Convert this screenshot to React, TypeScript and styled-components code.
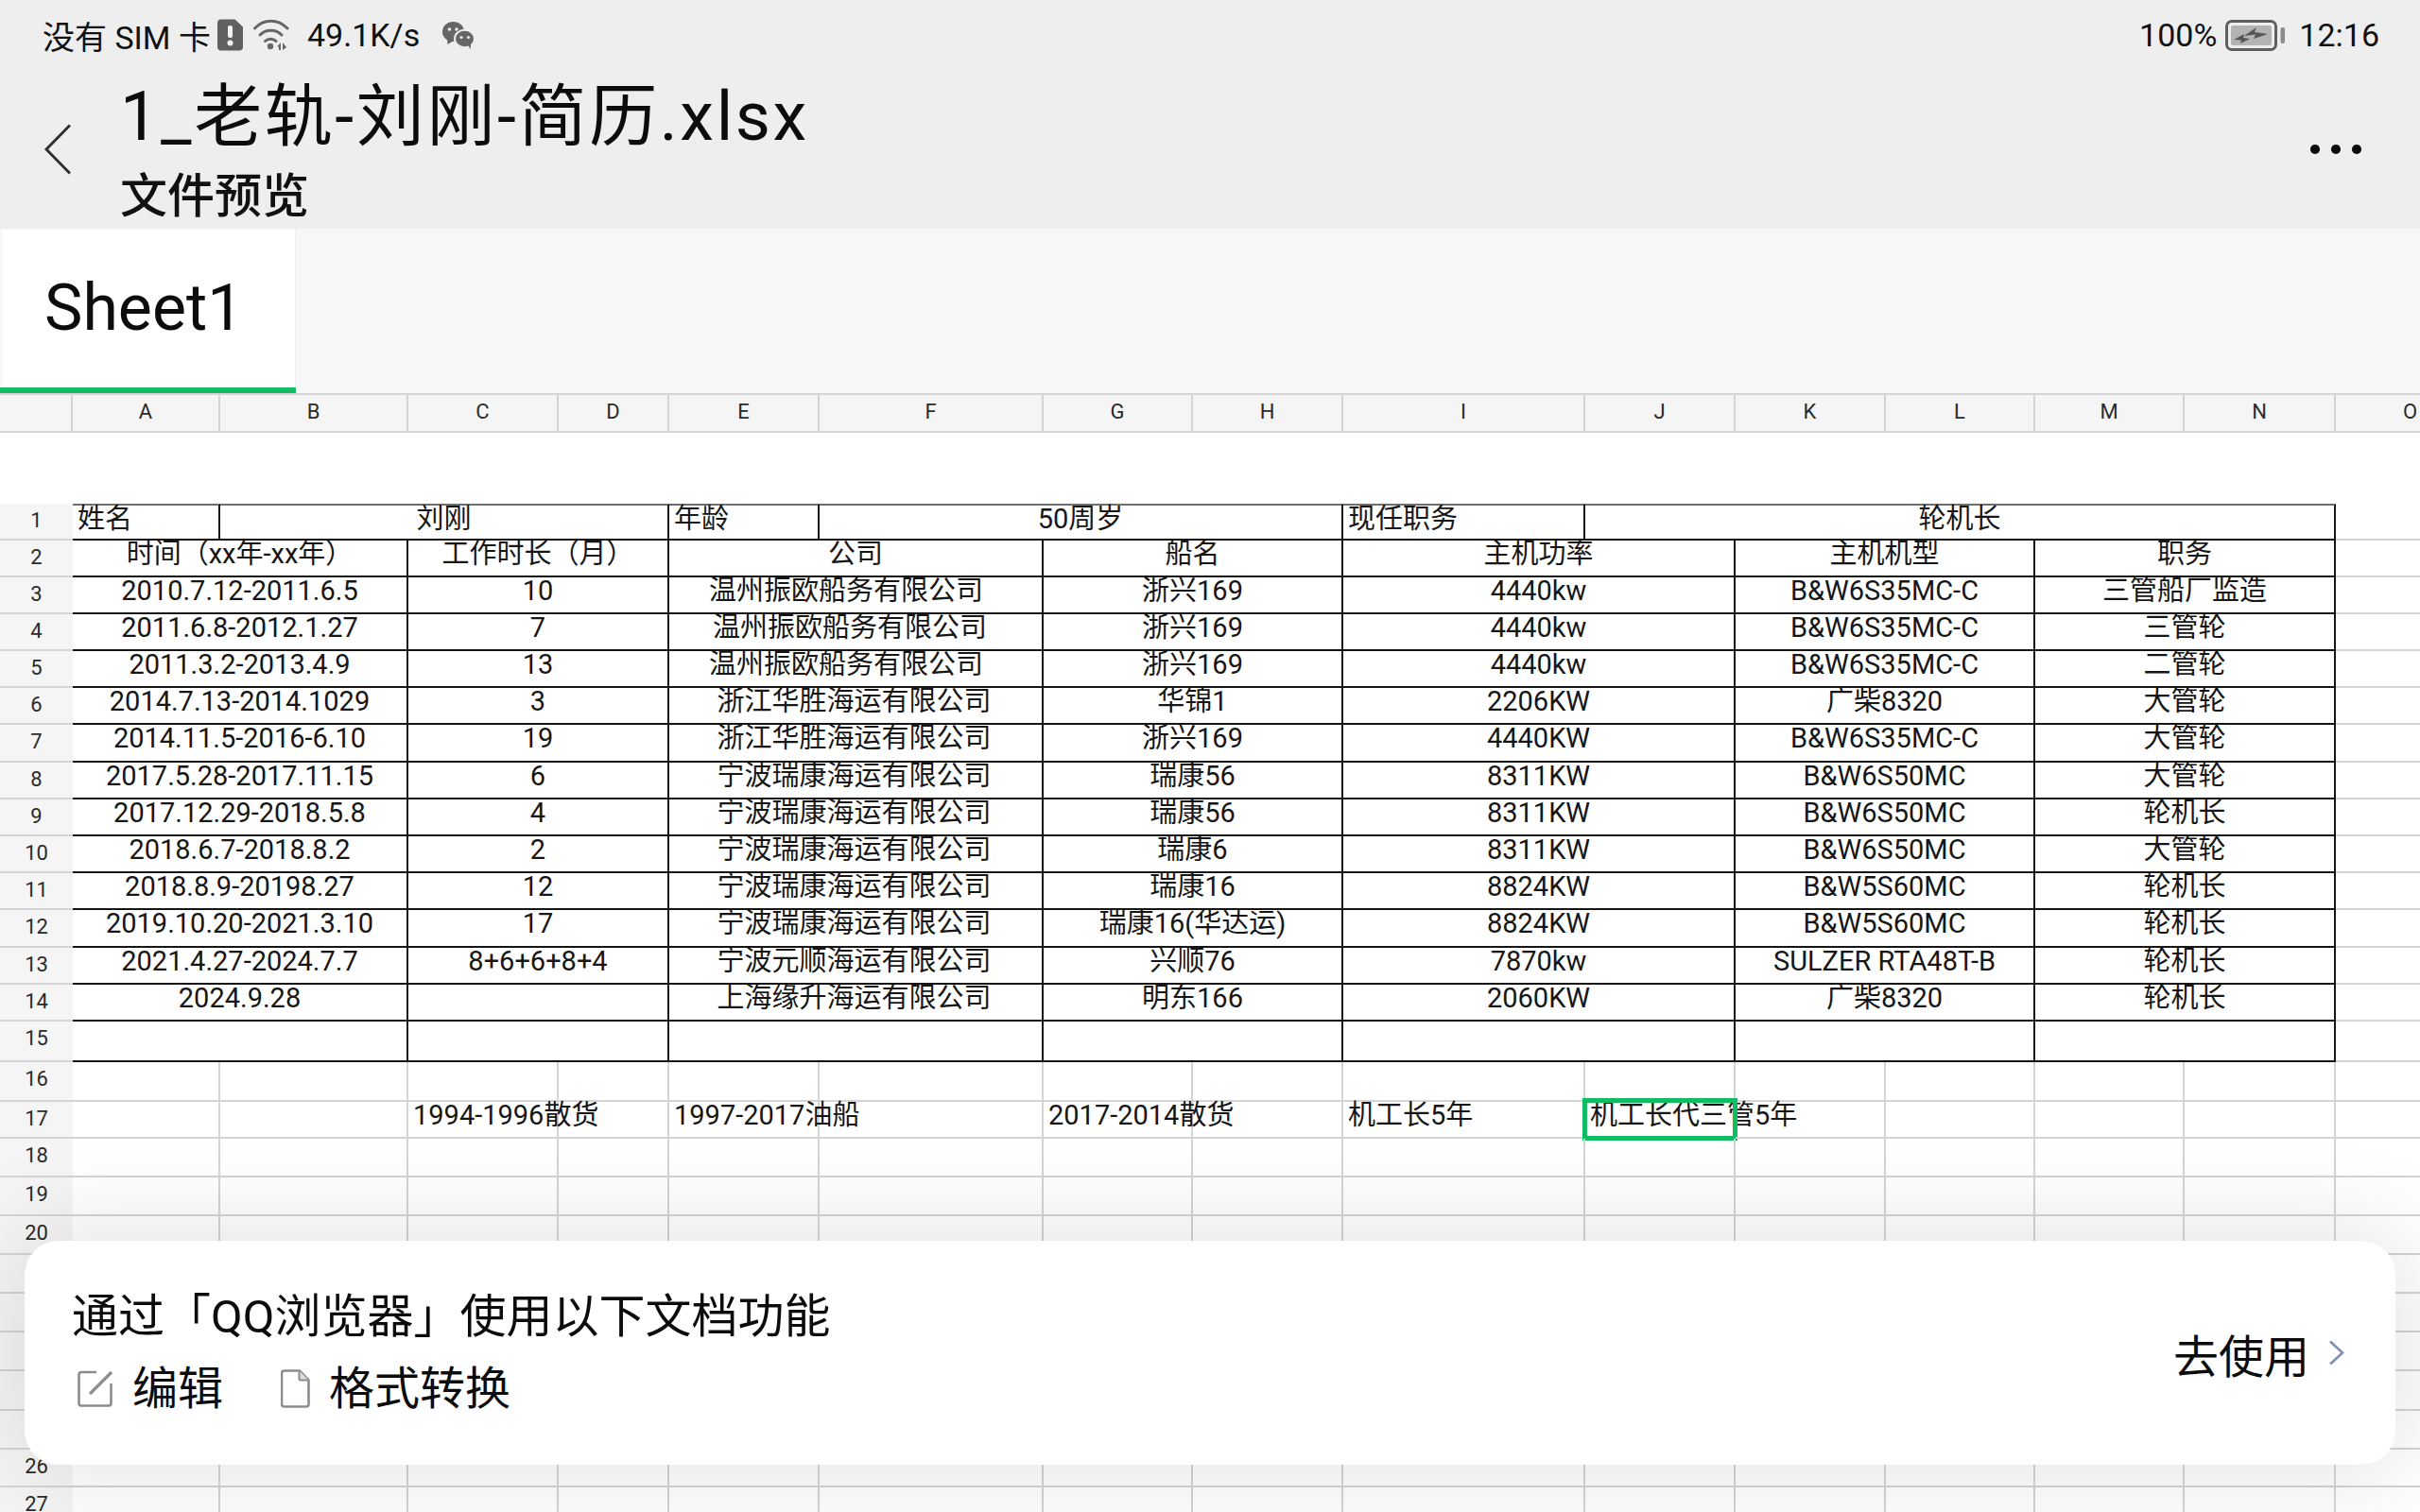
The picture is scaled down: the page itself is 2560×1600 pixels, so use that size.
import React from "react";
import styled, { createGlobalStyle } from "styled-components";

const TRACKS_X =
  "77px 156px 199px 159px 117px 159px 237px 158px 159px 256px 159px 159px 158px 158px 160px 159px";
const TRACKS_Y =
  "39px 39px 39px 39px 39px 39px 40px 39px 39px 39px 39px 40px 39px 39px 43px 42px 39px 41px 41px 41px 41px 41px 41px 42px 41px 40px 41px 41px";

const FONT = `Roboto, "Noto Sans CJK SC", sans-serif`;

const Global = createGlobalStyle`
  html, body { margin: 0; padding: 0; background: #fff; }
  body { font-family: ${FONT}; color: #111; overflow: hidden; }
`;

const Page = styled.div`
  position: relative;
  width: 2560px;
  height: 1600px;
  overflow: hidden;
  display: flex;
  flex-direction: column;
  background: #fff;
`;

const Top = styled.header`
  height: 242px;
  background: #eeeeee;
  flex: none;
`;

const StatusBar = styled.div`
  height: 74px;
  padding: 0 43px 0 45px;
  display: flex;
  align-items: center;
  justify-content: space-between;
  font-size: 34px;
  color: #111;
`;

const StatusGroup = styled.div`
  display: flex;
  align-items: center;
`;

const StatusText = styled.span<{ $left?: number }>`
  margin-left: ${(p) => p.$left ?? 0}px;
  white-space: nowrap;
`;

const StatusIcon = styled.svg<{ $left?: number }>`
  display: block;
  flex: none;
  margin-left: ${(p) => p.$left ?? 0}px;
`;

const NavBar = styled.div`
  height: 168px;
  display: flex;
  align-items: center;
  padding: 0 62px 0 47px;
`;

const BackIcon = styled.svg`
  flex: none;
  display: block;
  margin-right: 52px;
`;

const Titles = styled.div`
  flex: 1;
  display: flex;
  flex-direction: column;
`;

const Title = styled.div`
  font-size: 72px;
  line-height: 100px;
  letter-spacing: 2.6px;
  white-space: nowrap;
  color: #0c0c0c;
`;

const Subtitle = styled.div`
  font-size: 50px;
  line-height: 68px;
  font-weight: 500;
  color: #111;
`;

const Dots = styled.div`
  display: flex;
  gap: 12.4px;
`;

const Dot = styled.span`
  width: 9.6px;
  height: 9.6px;
  border-radius: 50%;
  background: #0c0c0c;
`;

const TabBar = styled.div`
  height: 174px;
  flex: none;
  background: #f7f7f7;
  display: flex;
`;

const Tab = styled.div`
  width: 313px;
  height: 174px;
  box-sizing: border-box;
  padding: 1px 0 0 2px;
  border-bottom: 6px solid #10bd62;
  display: flex;
  align-items: stretch;
`;

const TabLabel = styled.div`
  flex: 1;
  background: #fff;
  font-size: 68px;
  line-height: 166px;
  padding-left: 45px;
  border-right: 1px solid #eeeeee;
  color: #0c0c0c;
`;

const ColumnHeader = styled.div`
  display: grid;
  grid-template-columns: ${TRACKS_X};
  height: 42px;
  flex: none;
  box-sizing: border-box;
  background: #f5f5f5;
  border-top: 2px solid #d4d4d4;
  border-bottom: 2px solid #d4d4d4;
  width: 2720px;
`;

const ColumnLabel = styled.div`
  font-size: 22px;
  line-height: 36px;
  text-align: center;
  color: #2a2a2a;
  border-right: 2px solid #d4d4d4;
`;

const Sheet = styled.div`
  display: grid;
  grid-template-columns: ${TRACKS_X};
  grid-template-rows: ${TRACKS_Y};
  margin-top: 75px;
  width: 2720px;
  flex: none;
`;

const RowLabel = styled.div`
  font-size: 22px;
  line-height: 36px;
  text-align: center;
  color: #2a2a2a;
  background: #f5f5f5;
  border-bottom: 2px solid #d4d4d4;
  box-sizing: border-box;
`;

const Cell = styled.div<{
  $span?: number;
  $boxed?: boolean;
  $first?: boolean;
  $center?: boolean;
  $shift?: number;
}>`
  position: relative;
  grid-column: span ${(p) => p.$span ?? 1};
  box-sizing: border-box;
  min-width: 0;
  border-right: 2px solid ${(p) => (p.$boxed ? "#161616" : "#d4d4d4")};
  border-bottom: 2px solid ${(p) => (p.$boxed ? "#161616" : "#d4d4d4")};
  ${(p) => (p.$first ? "border-top: 2px solid #6f6f6f; margin-top: 0;" : "")}
  font-size: 29px;
  line-height: 29px;
  white-space: nowrap;
  color: #161616;
  text-align: ${(p) => (p.$center ? "center" : "left")};
  padding: ${(p) => (p.$first ? "0" : "0")} ${(p) => p.$shift ?? 0}px 0
    ${(p) => (p.$center ? 0 : 5)}px;
`;

const Selection = styled.div`
  position: absolute;
  left: -3px;
  top: -4px;
  width: 164px;
  height: 45px;
  box-sizing: border-box;
  border: 5px solid #10bd62;
  pointer-events: none;
`;

const Promo = styled.aside`
  position: absolute;
  left: 26px;
  bottom: 50px;
  width: 2508px;
  height: 237px;
  box-sizing: border-box;
  padding: 0 54px 0 50px;
  border-radius: 36px;
  background: #fff;
  box-shadow: 0 0 110px 12px rgba(0, 0, 0, 0.11);
  display: flex;
  align-items: center;
  justify-content: space-between;
`;

const PromoBody = styled.div`
  display: flex;
  flex-direction: column;
`;

const PromoTitle = styled.div`
  font-size: 49px;
  line-height: 76px;
  color: #0c0c0c;
`;

const Features = styled.div`
  display: flex;
  align-items: center;
  gap: 61px;
  padding-left: 6px;
`;

const Feature = styled.div`
  display: flex;
  align-items: center;
  gap: 20px;
  font-size: 48px;
  line-height: 76px;
  color: #0c0c0c;
`;

const UseLink = styled.div`
  display: flex;
  align-items: center;
  gap: 20px;
  font-size: 48px;
  color: #0c0c0c;
`;

const Glyph = styled.svg`
  display: block;
  flex: none;
`;

type Row = [string, string, string, string, string, string, string, number?];

const ROWS: Row[] = [
  ["2010.7.12-2011.6.5", "10", "温州振欧船务有限公司", "浙兴169", "4440kw", "B&W6S35MC-C", "三管船厂监造", 20],
  ["2011.6.8-2012.1.27", "7", "温州振欧船务有限公司", "浙兴169", "4440kw", "B&W6S35MC-C", "三管轮", 12],
  ["2011.3.2-2013.4.9", "13", "温州振欧船务有限公司", "浙兴169", "4440kw", "B&W6S35MC-C", "二管轮", 20],
  ["2014.7.13-2014.1029", "3", "浙江华胜海运有限公司", "华锦1", "2206KW", "广柴8320", "大管轮", 3],
  ["2014.11.5-2016-6.10", "19", "浙江华胜海运有限公司", "浙兴169", "4440KW", "B&W6S35MC-C", "大管轮", 3],
  ["2017.5.28-2017.11.15", "6", "宁波瑞康海运有限公司", "瑞康56", "8311KW", "B&W6S50MC", "大管轮", 3],
  ["2017.12.29-2018.5.8", "4", "宁波瑞康海运有限公司", "瑞康56", "8311KW", "B&W6S50MC", "轮机长", 3],
  ["2018.6.7-2018.8.2", "2", "宁波瑞康海运有限公司", "瑞康6", "8311KW", "B&W6S50MC", "大管轮", 3],
  ["2018.8.9-20198.27", "12", "宁波瑞康海运有限公司", "瑞康16", "8824KW", "B&W5S60MC", "轮机长", 3],
  ["2019.10.20-2021.3.10", "17", "宁波瑞康海运有限公司", "瑞康16(华达运)", "8824KW", "B&W5S60MC", "轮机长", 3],
  ["2021.4.27-2024.7.7", "8+6+6+8+4", "宁波元顺海运有限公司", "兴顺76", "7870kw", "SULZER RTA48T-B", "轮机长", 3],
  ["2024.9.28", "", "上海缘升海运有限公司", "明东166", "2060KW", "广柴8320", "轮机长", 3],
  ["", "", "", "", "", "", "", 0],
];

const LETTERS = "ABCDEFGHIJKLMNO".split("");

const TailCell = () => <Cell />;

const Blank = ({ row }: { row: number }) => (
  <>
    <RowLabel>{row}</RowLabel>
    {LETTERS.map((l) => (
      <Cell key={l} />
    ))}
  </>
);

export default function App() {
  return (
    <Page>
      <Global />
      <Top>
        <StatusBar>
          <StatusGroup>
            <StatusText>没有 SIM 卡</StatusText>
            <StatusIcon $left={7} width="27" height="34" viewBox="0 0 27 34">
              <path d="M4 0.5H18.5L27 8.5V29.5a4 4 0 0 1-4 4H4a4 4 0 0 1-4-4V4.5a4 4 0 0 1 4-4Z" fill="#606060" />
              <rect x="11" y="7" width="5" height="13" rx="2" fill="#f2f2f2" />
              <circle cx="13.5" cy="25.5" r="3" fill="#f2f2f2" />
            </StatusIcon>
            <StatusIcon $left={11} width="38" height="34" viewBox="0 0 38 34">
              <g fill="none" stroke="#666" strokeWidth="3" strokeLinecap="round">
                <path d="M1.5 10C11 -0.5 26 -0.5 36 10" />
                <path d="M7 17C13 10.5 24 10.5 30 17" />
                <path d="M12.5 23.5C15.5 20.5 21 20.5 24 23.5" />
              </g>
              <circle cx="18" cy="29" r="3.2" fill="#666" />
              <path d="M25.5 29 29 25V33H27V30.5ZM31 25 35 30 31 33Z" fill="#666" />
            </StatusIcon>
            <StatusText $left={19}>49.1K/s</StatusText>
            <StatusIcon $left={24} width="34" height="29" viewBox="0 0 34 29">
              <ellipse cx="11.5" cy="10.5" rx="11.5" ry="10.5" fill="#666" />
              <path d="M5 17 5.5 24 12 20Z" fill="#666" />
              <ellipse cx="23.5" cy="18" rx="10.5" ry="9.3" fill="#666" stroke="#eee" strokeWidth="2" />
              <path d="M27 25 30 29 30 23Z" fill="#666" />
              <circle cx="7.5" cy="8" r="1.8" fill="#eee" />
              <circle cx="15" cy="8" r="1.8" fill="#eee" />
              <circle cx="20" cy="16.5" r="1.6" fill="#eee" />
              <circle cx="27.5" cy="16.5" r="1.6" fill="#eee" />
            </StatusIcon>
          </StatusGroup>
          <StatusGroup>
            <StatusText>100%</StatusText>
            <StatusIcon $left={9} width="63" height="33" viewBox="0 0 63 33">
              <rect x="1.5" y="1.5" width="52" height="30" rx="5.5" fill="none" stroke="#5f5f5f" strokeWidth="3" />
              <rect x="6" y="6" width="43" height="21" rx="2" fill="#b3b3b3" />
              <path d="M20 17 33 8 31 13 45 15 30 20 32 15.5Z" fill="#555" />
              <path d="M9 21 20 15 19 19 26 20 16 25 17 21.5Z" fill="#555" />
              <rect x="58.5" y="8" width="4.5" height="17" rx="2" fill="#8a8a8a" />
            </StatusIcon>
            <StatusText $left={15}>12:16</StatusText>
          </StatusGroup>
        </StatusBar>
        <NavBar>
          <BackIcon width="28" height="54" viewBox="0 0 28 54">
            <path d="M27 1.5 2 27 27 52.5" fill="none" stroke="#2f2f2f" strokeWidth="3" />
          </BackIcon>
          <Titles>
            <Title>1_老轨-刘刚-简历.xlsx</Title>
            <Subtitle>文件预览</Subtitle>
          </Titles>
          <Dots>
            <Dot />
            <Dot />
            <Dot />
          </Dots>
        </NavBar>
      </Top>

      <TabBar>
        <Tab>
          <TabLabel>Sheet1</TabLabel>
        </Tab>
      </TabBar>

      <ColumnHeader>
        <ColumnLabel />
        {LETTERS.map((l) => (
          <ColumnLabel key={l}>{l}</ColumnLabel>
        ))}
      </ColumnHeader>

      <Sheet>
        <RowLabel>1</RowLabel>
        <Cell $boxed $first>姓名</Cell>
        <Cell $boxed $first $center $span={3}>刘刚</Cell>
        <Cell $boxed $first>年龄</Cell>
        <Cell $boxed $first $center $span={3}>50周岁</Cell>
        <Cell $boxed $first>现任职务</Cell>
        <Cell $boxed $first $center $span={5}>轮机长</Cell>
        <TailCell />

        <RowLabel>2</RowLabel>
        <Cell $boxed $center $span={2}>时间（xx年-xx年）</Cell>
        <Cell $boxed $center $span={2}>工作时长（月）</Cell>
        <Cell $boxed $center $span={2}>公司</Cell>
        <Cell $boxed $center $span={2}>船名</Cell>
        <Cell $boxed $center $span={2}>主机功率</Cell>
        <Cell $boxed $center $span={2}>主机机型</Cell>
        <Cell $boxed $center $span={2}>职务</Cell>
        <TailCell />

        {ROWS.map((r, i) => (
          <React.Fragment key={i}>
            <RowLabel>{i + 3}</RowLabel>
            <Cell $boxed $center $span={2}>{r[0]}</Cell>
            <Cell $boxed $center $span={2}>{r[1]}</Cell>
            <Cell $boxed $center $span={2} $shift={r[7]}>{r[2]}</Cell>
            <Cell $boxed $center $span={2}>{r[3]}</Cell>
            <Cell $boxed $center $span={2}>{r[4]}</Cell>
            <Cell $boxed $center $span={2}>{r[5]}</Cell>
            <Cell $boxed $center $span={2}>{r[6]}</Cell>
            <TailCell />
          </React.Fragment>
        ))}

        <Blank row={16} />

        <RowLabel>17</RowLabel>
        <Cell />
        <Cell />
        <Cell>1994-1996散货</Cell>
        <Cell />
        <Cell>1997-2017油船</Cell>
        <Cell />
        <Cell>2017-2014散货</Cell>
        <Cell />
        <Cell>机工长5年</Cell>
        <Cell>
          机工长代三管5年
          <Selection />
        </Cell>
        <Cell />
        <Cell />
        <Cell />
        <Cell />
        <Cell />

        {[18, 19, 20, 21, 22, 23, 24, 25, 26, 27].map((n) => (
          <Blank key={n} row={n} />
        ))}
      </Sheet>

      <Promo>
        <PromoBody>
          <PromoTitle>通过「QQ浏览器」使用以下文档功能</PromoTitle>
          <Features>
            <Feature>
              <Glyph width="38" height="39" viewBox="0 0 38 39">
                <path d="M20 2H4a2.5 2.5 0 0 0-2.5 2.5V35A2.5 2.5 0 0 0 4 37.5H33a2.5 2.5 0 0 0 2.5-2.5V14" fill="none" stroke="#8c8c8c" strokeWidth="2.6" />
                <path d="M13 25 36 2" fill="none" stroke="#8c8c8c" strokeWidth="3.2" />
              </Glyph>
              编辑
            </Feature>
            <Feature>
              <Glyph width="31" height="41" viewBox="0 0 31 41">
                <path d="M3.5 1.5H20L29.5 11.5V37a2.5 2.5 0 0 1-2.5 2.5H3.5A2.5 2.5 0 0 1 1 37V4a2.5 2.5 0 0 1 2.5-2.5Z" fill="none" stroke="#8c8c8c" strokeWidth="2.6" />
                <path d="M19.5 1.5V10a1.5 1.5 0 0 0 1.5 1.5H29.5" fill="#ddd" stroke="#8c8c8c" strokeWidth="2" />
              </Glyph>
              格式转换
            </Feature>
          </Features>
        </PromoBody>
        <UseLink>
          去使用
          <Glyph width="17" height="27" viewBox="0 0 17 27">
            <path d="M2 1.5 15 13.5 2 25.5" fill="none" stroke="#7e8fb3" strokeWidth="2.6" />
          </Glyph>
        </UseLink>
      </Promo>
    </Page>
  );
}
